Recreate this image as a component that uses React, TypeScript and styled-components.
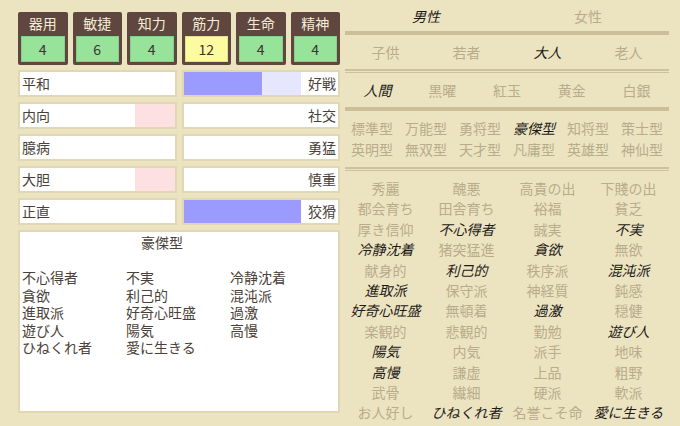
import React from "react";
import styled, { createGlobalStyle } from "styled-components";

const Global = createGlobalStyle`
  html, body {
    margin: 0;
    padding: 0;
    background: #ece4c1;
  }
  body {
    font-family: "Noto Sans CJK JP", "Noto Sans", sans-serif;
    font-size: 14px;
  }
`;

const Page = styled.div`
  width: 680px;
  height: 426px;
  overflow: hidden;
  display: flex;
  gap: 5px;
  padding-left: 18px;
  box-sizing: border-box;
  background: #ece4c1;
`;

const LeftCol = styled.div`
  width: 322px;
  margin-top: 12px;
  display: flex;
  flex-direction: column;
`;

const StatRow = styled.div`
  display: grid;
  grid-template-columns: repeat(6, 1fr);
  gap: 5px;
`;

const StatBox = styled.div`
  background: #5f463e;
  padding: 0 3px 3px;
  border-radius: 2px;
  display: flex;
  flex-direction: column;
`;

const StatName = styled.div`
  height: 24px;
  line-height: 23px;
  text-align: center;
  color: #f4ecd8;
  font-size: 14px;
`;

const StatValue = styled.div<{ $hi?: boolean }>`
  height: 26px;
  line-height: 25px;
  box-sizing: border-box;
  text-align: center;
  font-size: 14px;
  color: #3b3430;
  background: ${(p) => (p.$hi ? "#fdfb9f" : "#98e39a")};
  border: 1px solid ${(p) => (p.$hi ? "#e3df90" : "#86cf88")};
`;

const Rows = styled.div`
  margin-top: 5px;
  display: flex;
  flex-direction: column;
  gap: 5px;
`;

const Pair = styled.div`
  display: grid;
  grid-template-columns: 159px 158px;
  gap: 5px;
`;

const Gauge = styled.div`
  height: 27px;
  box-sizing: border-box;
  border: 2px solid #e1d8b3;
  background: #fff;
  display: flex;
  align-items: stretch;
  color: #4a3f39;
  font-size: 14px;
`;

const LowLabel = styled.div`
  flex: 1;
  padding-left: 2px;
  line-height: 23px;
`;

const HighLabel = styled.div`
  flex: 1;
  padding-right: 2px;
  text-align: right;
  line-height: 23px;
`;

const PinkCell = styled.div`
  width: 40px;
  background: #fde0e1;
`;

const BarTrack = styled.div`
  width: 117px;
  display: flex;
`;

const BarCell = styled.div<{ $light?: boolean }>`
  width: 39px;
  background: ${(p) => (p.$light ? "#e6e6ff" : "#9a9aff")};
`;

const Desc = styled.div`
  margin-top: 5px;
  height: 183px;
  box-sizing: border-box;
  border: 2px solid #e1d8b3;
  background: #fff;
  padding: 2px 2px 0;
  color: #4a3f39;
  font-size: 14px;
  line-height: 17.5px;
`;

const DescTitle = styled.div`
  text-align: center;
  padding-right: 34px;
  height: 35px;
`;

const DescList = styled.div`
  display: grid;
  grid-template-columns: repeat(3, 104px);
`;

const RightCol = styled.div`
  width: 324px;
  display: flex;
  flex-direction: column;
`;

const ChoiceRow = styled.div<{ $cols: number; $h: number }>`
  height: ${(p) => p.$h}px;
  display: grid;
  grid-template-columns: repeat(${(p) => p.$cols}, 1fr);
  align-items: center;
`;

const Rule = styled.div<{ $double?: boolean }>`
  height: 4px;
  box-sizing: border-box;
  ${(p) =>
    p.$double
      ? "border-top: 2px solid #cdc19c; border-bottom: 1.5px solid #cdc19c;"
      : "background: #cbbf9a;"}
`;

const ChoiceGrid = styled.div<{ $cols: number; $lh: number; $pad: string }>`
  display: grid;
  grid-template-columns: repeat(${(p) => p.$cols}, 1fr);
  line-height: ${(p) => p.$lh}px;
  padding: ${(p) => p.$pad};
`;

const Choice = styled.div<{ $on?: boolean }>`
  text-align: center;
  white-space: nowrap;
  font-size: 14px;
  color: ${(p) => (p.$on ? "#1d1a18" : "#b8ac8b")};
  font-style: ${(p) => (p.$on ? "italic" : "normal")};
`;

const stats = [
  { name: "器用", value: 4 },
  { name: "敏捷", value: 6 },
  { name: "知力", value: 4 },
  { name: "筋力", value: 12, hi: true },
  { name: "生命", value: 4 },
  { name: "精神", value: 4 },
];

// pink = segments filled on the low side, bars = segments on the high side
const gauges: { low: string; high: string; pink: number; bars: ("full" | "half")[] }[] = [
  { low: "平和", high: "好戦", pink: 0, bars: ["full", "full", "half"] },
  { low: "内向", high: "社交", pink: 1, bars: [] },
  { low: "臆病", high: "勇猛", pink: 0, bars: [] },
  { low: "大胆", high: "慎重", pink: 1, bars: [] },
  { low: "正直", high: "狡猾", pink: 0, bars: ["full", "full", "full"] },
];

const descItems = [
  "不心得者", "不実", "冷静沈着",
  "貪欲", "利己的", "混沌派",
  "進取派", "好奇心旺盛", "過激",
  "遊び人", "陽気", "高慢",
  "ひねくれ者", "愛に生きる",
];

const genders = ["男性", "女性"];
const ages = ["子供", "若者", "大人", "老人"];
const races = ["人間", "黒曜", "紅玉", "黄金", "白銀"];
const types = [
  "標準型", "万能型", "勇将型", "豪傑型", "知将型", "策士型",
  "英明型", "無双型", "天才型", "凡庸型", "英雄型", "神仙型",
];
const traits = [
  "秀麗", "醜悪", "高貴の出", "下賤の出",
  "都会育ち", "田舎育ち", "裕福", "貧乏",
  "厚き信仰", "不心得者", "誠実", "不実",
  "冷静沈着", "猪突猛進", "貪欲", "無欲",
  "献身的", "利己的", "秩序派", "混沌派",
  "進取派", "保守派", "神経質", "鈍感",
  "好奇心旺盛", "無頓着", "過激", "穏健",
  "楽観的", "悲観的", "勤勉", "遊び人",
  "陽気", "内気", "派手", "地味",
  "高慢", "謙虚", "上品", "粗野",
  "武骨", "繊細", "硬派", "軟派",
  "お人好し", "ひねくれ者", "名誉こそ命", "愛に生きる",
];
const chosen = new Set(descItems);

export default function App() {
  return (
    <>
      <Global />
      <Page>
        <LeftCol>
          <StatRow>
            {stats.map((s) => (
              <StatBox key={s.name}>
                <StatName>{s.name}</StatName>
                <StatValue $hi={s.hi}>{s.value}</StatValue>
              </StatBox>
            ))}
          </StatRow>
          <Rows>
            {gauges.map((g) => (
              <Pair key={g.low}>
                <Gauge>
                  <LowLabel>{g.low}</LowLabel>
                  {g.pink > 0 && <PinkCell />}
                </Gauge>
                <Gauge>
                  <BarTrack>
                    {g.bars.map((b, i) => (
                      <BarCell key={i} $light={b === "half"} />
                    ))}
                  </BarTrack>
                  <HighLabel>{g.high}</HighLabel>
                </Gauge>
              </Pair>
            ))}
          </Rows>
          <Desc>
            <DescTitle>豪傑型</DescTitle>
            <DescList>
              {descItems.map((d) => (
                <div key={d}>{d}</div>
              ))}
            </DescList>
          </Desc>
        </LeftCol>
        <RightCol>
          <ChoiceRow $cols={2} $h={31}>
            {genders.map((g) => (
              <Choice key={g} $on={g === "男性"}>{g}</Choice>
            ))}
          </ChoiceRow>
          <Rule />
          <ChoiceRow $cols={4} $h={34}>
            {ages.map((a) => (
              <Choice key={a} $on={a === "大人"}>{a}</Choice>
            ))}
          </ChoiceRow>
          <Rule $double />
          <ChoiceRow $cols={5} $h={34}>
            {races.map((r) => (
              <Choice key={r} $on={r === "人間"}>{r}</Choice>
            ))}
          </ChoiceRow>
          <Rule />
          <ChoiceGrid $cols={6} $lh={21} $pad="7px 0">
            {types.map((t) => (
              <Choice key={t} $on={t === "豪傑型"}>{t}</Choice>
            ))}
          </ChoiceGrid>
          <Rule $double />
          <ChoiceGrid $cols={4} $lh={20.4} $pad="7px 0 0">
            {traits.map((t) => (
              <Choice key={t} $on={chosen.has(t)}>{t}</Choice>
            ))}
          </ChoiceGrid>
        </RightCol>
      </Page>
    </>
  );
}
